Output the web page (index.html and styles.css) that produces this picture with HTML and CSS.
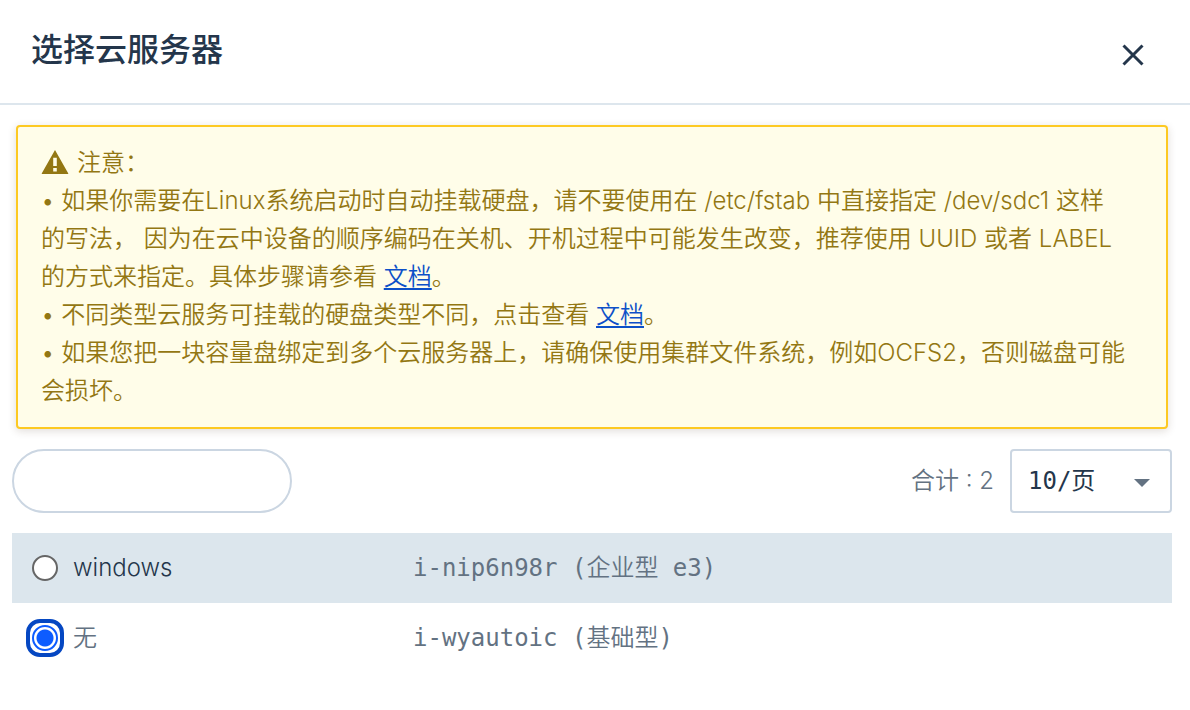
FILE: index.html
```html
<!DOCTYPE html>
<html lang="zh-CN">
<head>
<meta charset="utf-8">
<meta name="viewport" content="width=device-width, initial-scale=1">
<title>选择云服务器</title>
<link rel="stylesheet" href="styles.css">
</head>
<body>
<main class="dialog">
  <header class="dialog-header">
    <h1 class="dialog-title">选择云服务器</h1>
    <button class="close" type="button" aria-label="关闭">
      <svg width="24" height="24" viewBox="0 0 24 24" aria-hidden="true"><path d="M2.5 2.5l19 19M21.5 2.5l-19 19" fill="none" stroke="currentColor" stroke-width="3"/></svg>
    </button>
  </header>
  <section class="notice">
    <p class="notice-head">
      <svg class="warning-icon" width="28" height="24" viewBox="0 0 28 24" aria-hidden="true"><path d="M14 0L27.3 23.4Q27.3 24 26.6 24H1.4Q.7 24 .7 23.4ZM12.2 7.7V16H15.8V7.7ZM12.2 18V21.4H15.8V18Z" fill="currentColor" fill-rule="evenodd"/></svg>
      <span>注意：</span>
    </p>
    <p>• 如果你需要在Linux系统启动时自动挂载硬盘，请不要使用在 /etc/fstab 中直接指定 /dev/sdc1 这样的写法， 因为在云中设备的顺序编码在关机、开机过程中可能发生改变，推荐使用 UUID 或者 LABEL 的方式来指定。具体步骤请参看 <a href="#mount">文档</a>。</p>
    <p>• 不同类型云服务可挂载的硬盘类型不同，点击查看 <a href="#types">文档</a>。</p>
    <p>• 如果您把一块容量盘绑定到多个云服务器上，请确保使用集群文件系统，例如OCFS2，否则磁盘可能会损坏。</p>
  </section>
  <div class="content">
    <div class="toolbar">
      <input class="search" type="text" aria-label="搜索">
      <div class="paging">
        <span>合计 : 2</span>
        <span class="select-wrap">
          <select class="page-size" aria-label="每页数量"><option>10/页</option><option>20/页</option></select>
          <svg class="caret" width="16" height="8" viewBox="0 0 16 8" aria-hidden="true"><path d="M0 0H16L8 8Z" fill="currentColor"/></svg>
        </span>
      </div>
    </div>
    <table class="servers">
      <tbody>
        <tr class="hovered">
          <td class="name"><label><input class="radio" type="radio" name="server"><span>windows</span></label></td>
          <td class="id">i-nip6n98r (企业型 e3)</td>
        </tr>
        <tr>
          <td class="name"><label><input class="radio" type="radio" name="server" checked><span>无</span></label></td>
          <td class="id">i-wyautoic (基础型)</td>
        </tr>
      </tbody>
    </table>
  </div>
</main>
</body>
</html>
```
FILE: styles.css
```css
* {
  box-sizing: border-box;
}

body {
  margin: 0;
  background: #fff;
  color: #637282;
  font: 350 24px/38px Inter, "Noto Sans CJK SC", sans-serif;
}

.dialog-header {
  display: flex;
  align-items: center;
  justify-content: space-between;
  padding: 26px 40px 29px 31px;
  border-bottom: 2px solid #dde6ed;
  color: #24364b;
}

.dialog-title {
  margin: 0;
  font-size: 32px;
  line-height: 48px;
  font-weight: 500;
}

.close {
  display: flex;
  padding: 10px 5px 0;
  border: 0;
  background: none;
  color: inherit;
}

.notice {
  margin: 20px 22px 0 16px;
  padding: 17px 39px 17px 23px;
  border: 2px solid #fdc922;
  border-radius: 4px;
  background: #fffde9;
  box-shadow: 0 2px 8px rgba(60, 40, 20, 0.16);
  color: #937713;
}

.notice p {
  margin: 0;
}

.notice-head {
  display: flex;
  align-items: center;
  gap: 8px;
}

.warning-icon {
  margin-bottom: 2px;
}

.notice a {
  color: #0d50c8;
  text-decoration-thickness: 2px;
  text-underline-offset: 3px;
}

.content {
  padding: 20px 18px 20px 12px;
}

.toolbar,
.paging {
  display: flex;
  align-items: center;
}

.toolbar {
  justify-content: space-between;
  margin-bottom: 20px;
}

.paging {
  gap: 16px;
}

.search {
  width: 280px;
  height: 64px;
  padding: 0 24px;
  border: 2px solid #cbd6e2;
  border-radius: 32px;
  background: #fff;
  font: inherit;
}

.select-wrap {
  display: grid;
  align-items: center;
}

.select-wrap > * {
  grid-area: 1 / 1;
}

.page-size {
  appearance: none;
  width: 162px;
  height: 64px;
  padding: 0 16px;
  border: 2px solid #cbd6e2;
  border-radius: 4px;
  background: #fff;
  color: #24364b;
  font: 24px "DejaVu Sans Mono", "Noto Sans CJK SC", monospace;
}

.caret {
  justify-self: end;
  margin: 4px 22px 0 0;
  pointer-events: none;
}

.servers {
  width: 100%;
  border-collapse: collapse;
}

.servers td {
  height: 70px;
  padding: 0 20px;
}

.servers .name {
  width: 381px;
}

.hovered {
  background: #dce6ed;
}

.hovered .name {
  color: #24364b;
}

.servers .id {
  font-family: "DejaVu Sans Mono", "Noto Sans CJK SC", monospace;
}

.name label {
  display: flex;
  align-items: center;
  gap: 15px;
}

.radio {
  appearance: none;
  position: relative;
  width: 26px;
  height: 26px;
  margin: 0;
  border: 2px solid #666;
  border-radius: 50%;
  background: #fff;
}

.radio:checked {
  border-color: #0d5cff;
  background: radial-gradient(circle, #0d5cff 8px, #fff 9px);
}

.radio:checked::before {
  content: "";
  position: absolute;
  inset: -8px;
  border: 4px solid #0547c2;
  border-radius: 14px;
}
```
